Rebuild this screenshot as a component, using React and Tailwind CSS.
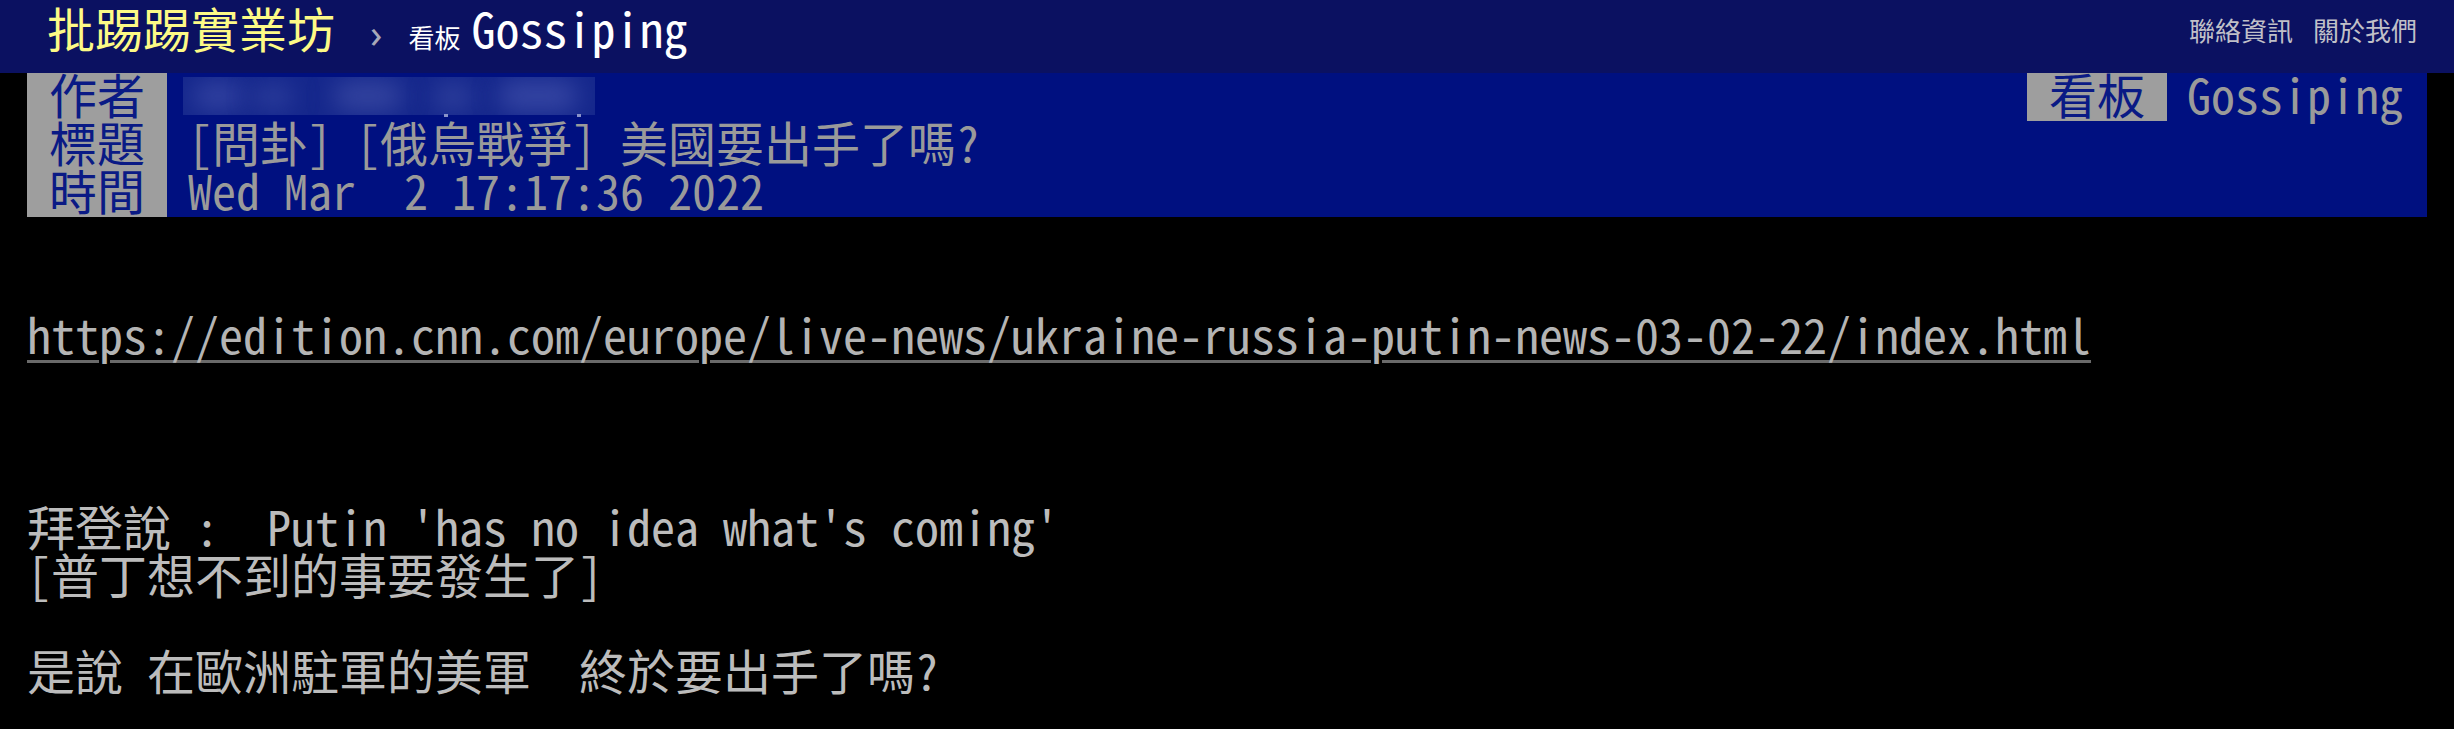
import React from "react";

const MONO = "font-['Noto_Sans_Mono_CJK_TC','Noto_Sans_CJK_TC',monospace]";
const SANS = "font-['Noto_Sans_CJK_TC','Noto_Sans',sans-serif]";

function Line({ children, className = "" }) {
  return (
    <div className={"h-[48px] leading-[40px] whitespace-pre " + className}>
      {children}
    </div>
  );
}

function Tag({ children }) {
  return (
    <div className="w-[140px] shrink-0 bg-[#9e9e9e] text-center text-[#0a1a85]">
      {children}
    </div>
  );
}

function Blurred() {
  return (
    <div className="relative ml-[16px] mt-[4px] h-[38px] w-[412px] shrink-0 overflow-hidden bg-[#15278c]">
      <div className="absolute left-[10px] top-[6px] h-[26px] w-[50px] rounded-full bg-[#3444a2] blur-md" />
      <div className="absolute left-[70px] top-[8px] h-[24px] w-[40px] rounded-full bg-[#2d3e9c] blur-md" />
      <div className="absolute left-[150px] top-[4px] h-[30px] w-[70px] rounded-full bg-[#34449f] blur-md" />
      <div className="absolute left-[250px] top-[6px] h-[28px] w-[40px] rounded-full bg-[#2e3f9c] blur-md" />
      <div className="absolute left-[315px] top-[4px] h-[30px] w-[80px] rounded-full bg-[#3646a3] blur-md" />
    </div>
  );
}

export default function App() {
  return (
    <div className="relative h-[729px] w-[2454px] overflow-hidden bg-black">
      {/* top bar */}
      <header className="flex h-[73px] items-start justify-between bg-[#0b1161]">
        <div className="flex items-baseline pl-[47px] pt-[3px]">
          <span className={SANS + " text-[48px] leading-[48px] text-[#fdfa86]"}>
            批踢踢實業坊
          </span>
          <span className="ml-[35px] font-['Noto_Sans',sans-serif] text-[40px] leading-[48px] text-[#a8a8b8]">
            ›
          </span>
          <span className={SANS + " ml-[26px] text-[26px] text-white"}>看板</span>
          <span className={MONO + " ml-[11px] text-[48px] leading-[48px] text-white"}>
            Gossiping
          </span>
        </div>
        <div className={SANS + " flex gap-[20px] pr-[37px] pt-[17px] text-[26px] leading-[26px] text-[#c0c0c8]"}>
          <span>聯絡資訊</span>
          <span>關於我們</span>
        </div>
      </header>

      {/* article */}
      <div className={"mx-[27px] text-[48px] " + MONO}>
        <div className="relative flex h-[48px] bg-[#001080] leading-[40px]">
          <Tag>作者</Tag>
          <Blurred />
          <span className="absolute left-[417px] top-[41px] h-[3px] w-[4px] bg-[#8a93c8]" />
          <span className="absolute left-[550px] top-[41px] h-[3px] w-[4px] bg-[#8a93c8]" />
          <div className="flex-1" />
          <Tag>看板</Tag>
          <div className="ml-[20px] mr-[24px] whitespace-pre text-[#9a9a9a]">Gossiping</div>
        </div>
        <div className="flex h-[48px] bg-[#001080] leading-[40px]">
          <Tag>標題</Tag>
          <div className="ml-[21px] whitespace-pre text-[#9a9a9a]">[問卦] [俄烏戰爭] 美國要出手了嗎?</div>
        </div>
        <div className="flex h-[48px] bg-[#001080] leading-[40px]">
          <Tag>時間</Tag>
          <div className="ml-[21px] whitespace-pre text-[#9a9a9a]">Wed Mar  2 17:17:36 2022</div>
        </div>

        <div className="text-[#bcbcbc]">
          <Line />
          <Line />
          <Line>
            <span className="text-[#b4b4b4] underline decoration-[#6a6a6a] decoration-3 underline-offset-6">
              https://edition.cnn.com/europe/live-news/ukraine-russia-putin-news-03-02-22/index.html
            </span>
          </Line>
          <Line />
          <Line />
          <Line />
          <Line>拜登說 :  Putin 'has no idea what's coming'</Line>
          <Line>[普丁想不到的事要發生了]</Line>
          <Line />
          <Line>是說 在歐洲駐軍的美軍  終於要出手了嗎?</Line>
          <Line />
        </div>
      </div>
    </div>
  );
}
